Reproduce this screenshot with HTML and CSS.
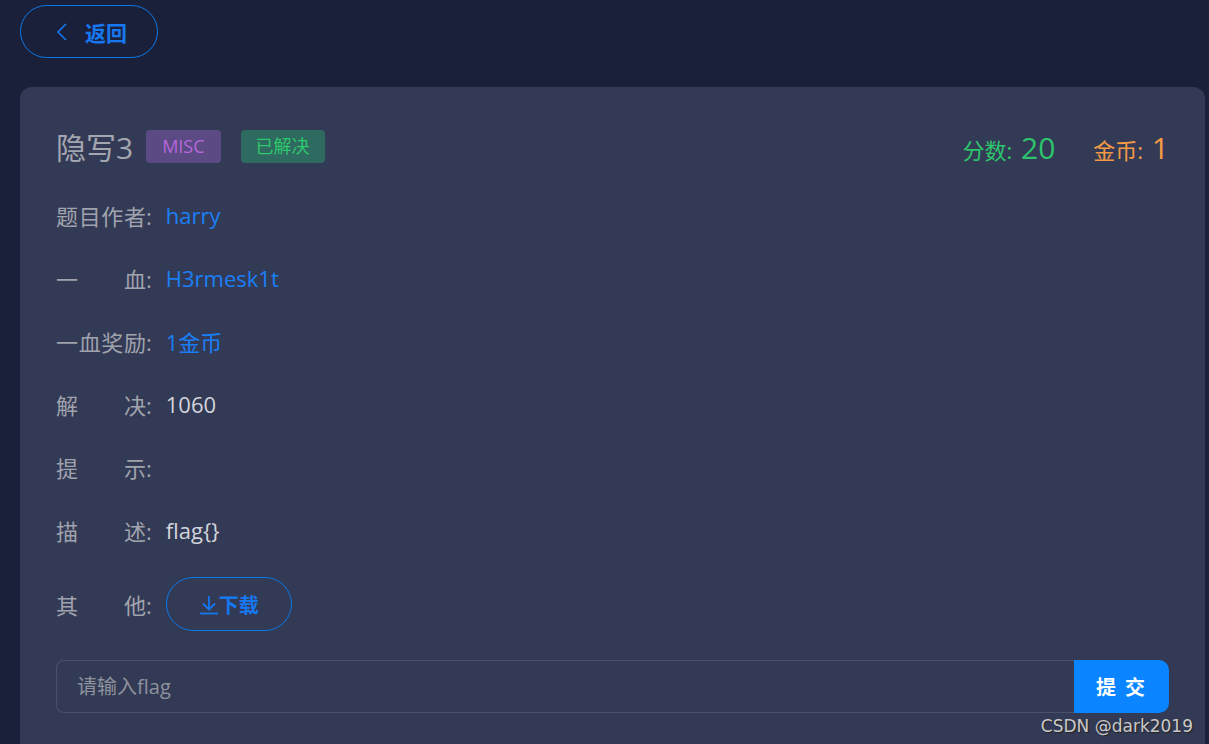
FILE: index.html
```html
<!DOCTYPE html>
<html lang="zh-CN">
<head>
    <meta charset="UTF-8">
    <meta name="viewport" content="width=device-width, initial-scale=1.0">
    <title>隐写3</title>
    <link rel="stylesheet" href="styles.css">
</head>
<body>
    <!-- Back -->
    <button class="back-button">
        <svg class="back-icon" viewBox="0 0 14 20" width="14" height="20">
            <path d="M11 2 L3 10 L11 18" fill="none" stroke="currentColor" stroke-width="1.6"/>
        </svg>
        <span>返回</span>
    </button>

    <div class="card">
        <!-- Header -->
        <div class="card-header">
            <div class="title-group">
                <h2 class="title">隐写3</h2>
                <span class="tag tag-misc">MISC</span>
                <span class="tag tag-solved">已解决</span>
            </div>
            <div class="stats">
                <span class="stat stat-score">分数: <b>20</b></span>
                <span class="stat stat-coin">金币: <b>1</b></span>
            </div>
        </div>

        <!-- Info rows -->
        <div class="info-row">
            <span class="label"><span class="label-name">题目作者</span>:</span>
            <span class="value link">harry</span>
        </div>
        <div class="info-row">
            <span class="label"><span class="label-name">一血</span>:</span>
            <span class="value link">H3rmesk1t</span>
        </div>
        <div class="info-row">
            <span class="label"><span class="label-name">一血奖励</span>:</span>
            <span class="value link">1金币</span>
        </div>
        <div class="info-row">
            <span class="label"><span class="label-name">解决</span>:</span>
            <span class="value">1060</span>
        </div>
        <div class="info-row">
            <span class="label"><span class="label-name">提示</span>:</span>
            <span class="value"></span>
        </div>
        <div class="info-row">
            <span class="label"><span class="label-name">描述</span>:</span>
            <span class="value">flag{}</span>
        </div>
        <div class="info-row info-row-last">
            <span class="label"><span class="label-name">其他</span>:</span>
            <button class="download-button">
                <svg viewBox="0 0 20 22" width="20" height="22">
                    <path d="M10 3 V16 M4 10.5 L10 16.5 L16 10.5" fill="none" stroke="currentColor" stroke-width="1.8"/>
                    <path d="M1 20.5 H19" stroke="currentColor" stroke-width="1.8"/>
                </svg>
                <span>下载</span>
            </button>
        </div>

        <!-- Flag submit -->
        <div class="submit-row">
            <input type="text" class="flag-input" placeholder="请输入flag">
            <button class="submit-button">提 交</button>
        </div>
    </div>

    <div class="watermark">CSDN @dark2019</div>
</body>
</html>
```

FILE: styles.css
```css
/* General */
body {
    margin: 0;
    padding: 5px 0 0 20px;
    background: #1b203a;
    font-family: "Open Sans", "Noto Sans CJK SC", sans-serif;
    color: #a0a3ad;
    overflow: hidden;
    height: 739px;
}

button {
    font-family: inherit;
    cursor: pointer;
}

/* Back button */
.back-button {
    display: flex;
    align-items: center;
    gap: 16px;
    width: 138px;
    height: 53px;
    padding: 0 0 0 34px;
    background: transparent;
    border: 1px solid #0b78e8;
    border-radius: 27px;
    color: #1677f0;
    font-size: 21px;
    font-weight: bold;
}

.back-icon {
    color: #1677f0;
}

/* Card */
.card {
    width: 1113px;
    margin-top: 29px;
    padding: 36px 36px 31px 36px;
    background: #333a55;
    border-radius: 12px 12px 0 0;
}

.card-header {
    display: flex;
    justify-content: space-between;
    align-items: center;
    height: 46px;
    margin-bottom: 30px;
}

.title-group {
    display: flex;
    align-items: center;
}

.title {
    margin: 0 13px 0 0;
    font-size: 30px;
    font-weight: normal;
    color: #a3a6b0;
}

.tag {
    height: 33px;
    line-height: 33px;
    padding: 0 16px;
    border-radius: 4px;
    font-size: 18px;
}

.tag-misc {
    background: #5b4a84;
    color: #b768dc;
    margin-right: 20px;
}

.tag-solved {
    background: #2e6a5f;
    color: #2fc96d;
    padding: 0 15px;
}

.stats {
    display: flex;
    align-items: baseline;
    gap: 38px;
    padding-top: 2px;
}

.stat {
    font-size: 22px;
}

.stat b {
    font-weight: normal;
    font-size: 30px;
    margin-left: 3px;
}

.stat-score {
    color: #2ec46c;
}

.stat-coin {
    color: #f49a45;
}

/* Info rows */
.info-row {
    display: flex;
    align-items: center;
    min-height: 32px;
    margin-bottom: 31px;
    font-size: 22px;
}

.info-row-last {
    margin-bottom: 29px;
}

.label {
    color: #a0a3ad;
    margin-right: 14px;
    white-space: nowrap;
}

.label-name {
    display: inline-block;
    width: 90px;
    text-align: justify;
    text-align-last: justify;
}

.value {
    color: #d2d5dc;
}

.value.link {
    color: #1a7ff5;
}

.download-button {
    display: flex;
    align-items: center;
    justify-content: center;
    width: 126px;
    height: 54px;
    background: transparent;
    border: 1px solid #0b78e8;
    border-radius: 27px;
    color: #1677f0;
    font-size: 20px;
    font-weight: bold;
}

/* Submit */
.submit-row {
    display: flex;
    height: 53px;
}

.flag-input {
    flex: 1;
    box-sizing: border-box;
    height: 53px;
    padding: 0 20px;
    background: transparent;
    border: 1px solid #4b5169;
    border-right: none;
    border-radius: 8px 0 0 8px;
    color: #d2d5dc;
    font-family: inherit;
    font-size: 20px;
    outline: none;
}

.flag-input::placeholder {
    color: #8e929c;
}

.submit-button {
    width: 95px;
    height: 53px;
    background: #0a84ff;
    border: none;
    border-radius: 0 10px 10px 0;
    color: #fff;
    font-size: 20px;
    font-weight: bold;
    letter-spacing: 2px;
}

/* Watermark */
.watermark {
    position: absolute;
    right: 16px;
    bottom: 8px;
    font-family: "DejaVu Sans", sans-serif;
    font-size: 17px;
    color: #c9c9c9;
    text-shadow: 1px 1px 1px #222;
}
```
